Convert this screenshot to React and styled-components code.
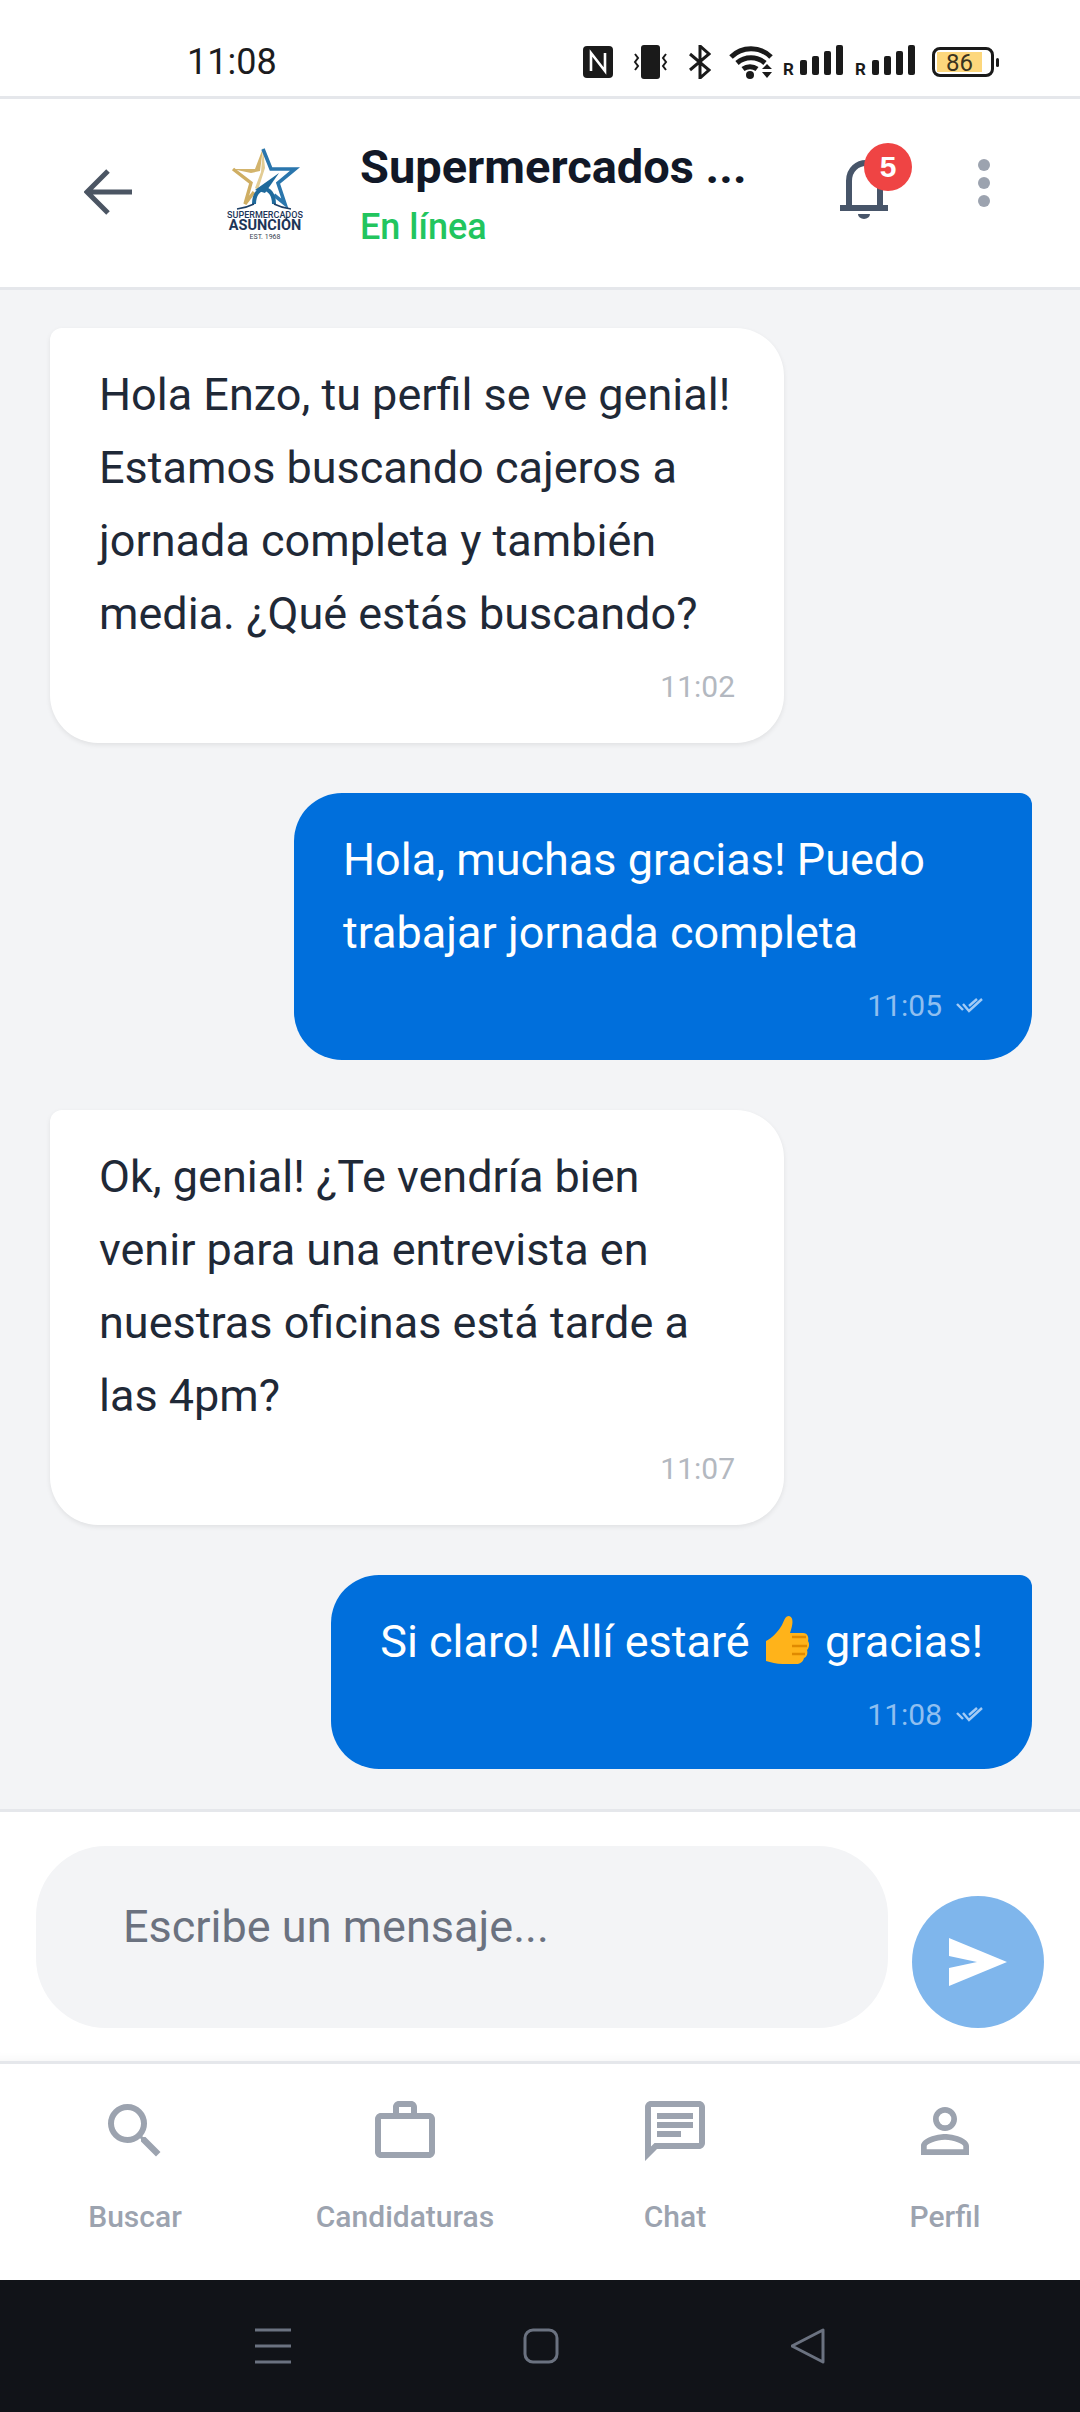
import styled, { createGlobalStyle } from "styled-components";
import { MdSearch, MdOutlineWorkOutline, MdOutlineChat, MdPersonOutline } from "react-icons/md";

const GlobalStyle = createGlobalStyle`
  html, body {
    margin: 0;
    padding: 0;
    background: #ffffff;
    font-family: Roboto, "Noto Sans", sans-serif;
  }
  * {
    box-sizing: border-box;
  }
`;

const Screen = styled.div`
  width: 1080px;
  height: 2412px;
  display: flex;
  flex-direction: column;
  overflow: hidden;
  background: #ffffff;
`;

const StatusBar = styled.div`
  height: 99px;
  flex-shrink: 0;
  display: flex;
  align-items: center;
  justify-content: space-between;
  padding: 27px 86px 0 187px;
  border-bottom: 3px solid #e5e7eb;
`;
const StatusTime = styled.span`
  font-size: 36px;
  color: #1c1c1e;
`;
const StatusIcons = styled.div`
  display: flex;
  align-items: center;
`;
const StatusSvg = styled.svg`
  display: block;
  margin-left: ${(p) => p.$gap || 0}px;
`;
const Battery = styled.div`
  position: relative;
  width: 62px;
  height: 30px;
  margin-left: 17px;
  border: 3px solid #1a1a1a;
  border-radius: 8px;
  padding: 2px;
  &::after {
    content: "";
    position: absolute;
    right: -8px;
    top: 8px;
    width: 3px;
    height: 9px;
    background: #1a1a1a;
    border-radius: 2px;
  }
`;
const BatteryFill = styled.div`
  width: 45px;
  height: 100%;
  background: #fdd77c;
  color: #3a3320;
  font-size: 24px;
  line-height: 22px;
  text-align: center;
`;

const Header = styled.header`
  height: 191px;
  flex-shrink: 0;
  display: flex;
  align-items: center;
  padding: 0 90px 2px 84px;
  border-bottom: 3px solid #e5e7eb;
`;
const BackIcon = styled.svg`
  display: block;
  flex-shrink: 0;
  margin-right: 93px;
`;
const Logo = styled.svg`
  display: block;
  flex-shrink: 0;
  margin: 3px 55px 0 0;
`;
const TitleBlock = styled.div`
  flex: 1;
  display: flex;
  flex-direction: column;
  gap: 12px;
  margin-top: 6px;
`;
const Title = styled.h1`
  margin: 0;
  font-size: 47px;
  line-height: 52px;
  font-weight: 700;
  color: #111827;
`;
const Online = styled.span`
  font-size: 36px;
  line-height: 44px;
  font-weight: 500;
  color: #22c55e;
`;
const BellWrap = styled.div`
  position: relative;
  width: 48px;
  height: 60px;
  margin: 0 90px 6px 0;
`;
const Badge = styled.span`
  position: absolute;
  left: 24px;
  top: -16px;
  width: 48px;
  height: 48px;
  border-radius: 50%;
  background: #ef4444;
  color: #ffffff;
  font-family: "Liberation Sans", sans-serif;
  font-size: 30px;
  font-weight: 700;
  line-height: 48px;
  text-align: center;
`;
const MoreDots = styled.div`
  display: flex;
  flex-direction: column;
  gap: 6px;
  margin-bottom: 18px;
`;
const Dot = styled.span`
  width: 12px;
  height: 12px;
  border-radius: 50%;
  background: #9ca3af;
`;

const Chat = styled.main`
  flex: 1;
  display: flex;
  flex-direction: column;
  gap: 50px;
  padding: 38px 48px 0 50px;
  background: #f3f4f6;
  overflow: hidden;
`;
const Bubble = styled.div`
  align-self: ${(p) => (p.$mine ? "flex-end" : "flex-start")};
  max-width: ${(p) => (p.$mine ? 738 : 734)}px;
  padding: 30px 49px ${(p) => (p.$mine ? 35 : 37)}px 49px;
  border-radius: ${(p) => (p.$mine ? "48px 12px 48px 48px" : "12px 48px 48px 48px")};
  background: ${(p) => (p.$mine ? "#006fdc" : "#ffffff")};
  color: ${(p) => (p.$mine ? "#ffffff" : "#1f2937")};
  box-shadow: ${(p) => (p.$mine ? "none" : "0 2px 5px rgba(0, 0, 0, 0.08)")};
`;
const BubbleText = styled.p`
  margin: 0;
  font-size: 45px;
  line-height: 73px;
`;
const Thumb = styled.svg`
  display: inline-block;
  vertical-align: -8px;
  margin: 0 3px 0 4px;
`;
const Meta = styled.div`
  display: flex;
  justify-content: flex-end;
  align-items: center;
  gap: 14px;
  margin-top: 16px;
  height: 40px;
  font-size: 30px;
  color: ${(p) => (p.$mine ? "#8fbff0" : "#b3b8c0")};
`;

const Composer = styled.div`
  height: 255px;
  flex-shrink: 0;
  display: flex;
  align-items: flex-end;
  gap: 24px;
  padding: 37px 36px 33px;
  background: #ffffff;
  border-top: 3px solid #e5e7eb;
  border-bottom: 3px solid #e5e7eb;
  box-shadow: inset 0 -10px 10px -8px rgba(0, 0, 0, 0.04);
`;
const InputBox = styled.div`
  width: 852px;
  height: 182px;
  padding: 57px 87px 0;
  border-radius: 70px;
  background: #f3f4f6;
  color: #6b7280;
  font-size: 45px;
  line-height: 48px;
`;
const SendButton = styled.button`
  width: 132px;
  height: 132px;
  border: 0;
  padding: 0;
  border-radius: 50%;
  background: #7fb6ec;
  display: flex;
  align-items: center;
  justify-content: center;
`;

const Nav = styled.nav`
  height: 216px;
  flex-shrink: 0;
  display: grid;
  grid-template-columns: repeat(4, 1fr);
  padding-top: 31px;
  background: #ffffff;
`;
const NavItem = styled.div`
  display: flex;
  flex-direction: column;
  align-items: center;
  gap: 32px;
  color: #9ca3af;
`;
const NavLabel = styled.span`
  font-size: 30px;
  line-height: 36px;
  font-weight: 500;
`;

const SystemBar = styled.div`
  height: 132px;
  flex-shrink: 0;
  display: flex;
  align-items: center;
  gap: 232px;
  padding-left: 255px;
  background: #111318;
`;

const DoubleCheck = () => (
  <svg width="27" height="16" viewBox="0 0 27 16" fill="none" stroke="#a3cbf5" strokeWidth="2.4">
    <path d="M1 7l6 6" />
    <path d="M7 7l6 7L26 2" />
    <path d="M13 9l8-7" />
  </svg>
);

const ThumbsUp = () => (
  <Thumb width="46" height="50" viewBox="0 0 46 50">
    <path d="M1 26c6-3 12-9 16-16 2-4 3-9 7-9 5 1 4 9 1 17h13c5 0 6 5 5 8 2 3 1 7-1 9 1 3 0 7-3 8-1 4-4 6-8 6H18C11 49 6 47 1 46z" fill="#ffb31a" />
    <path d="M27 22h14M27 31h15M27 39h13" stroke="#e08a00" strokeWidth="2.5" fill="none" />
  </Thumb>
);

const SignalBars = ({ gap }) => (
  <StatusSvg $gap={gap} width="60" height="34" viewBox="0 0 60 34">
    <text x="0" y="30" fontFamily="Roboto, sans-serif" fontWeight="700" fontSize="17" fill="#1a1a1a">R</text>
    <rect x="17" y="15" width="7" height="15" rx="2" fill="#1a1a1a" />
    <rect x="29" y="11" width="7" height="19" rx="2" fill="#1a1a1a" />
    <rect x="41" y="6" width="7" height="24" rx="2" fill="#1a1a1a" />
    <rect x="53" y="0" width="7" height="30" rx="2" fill="#1a1a1a" />
  </StatusSvg>
);

const messages = [
  { id: 1, text: "Hola Enzo, tu perfil se ve genial! Estamos buscando cajeros a jornada completa y también media. ¿Qué estás buscando?", time: "11:02" },
  { id: 2, mine: true, text: "Hola, muchas gracias! Puedo trabajar jornada completa", time: "11:05" },
  { id: 3, text: "Ok, genial! ¿Te vendría bien venir para una entrevista en nuestras oficinas está tarde a las 4pm?", time: "11:07" },
  { id: 4, mine: true, text: <>Si claro! Allí estaré <ThumbsUp /> gracias!</>, time: "11:08" },
];

const navItems = [
  { label: "Buscar", Icon: MdSearch },
  { label: "Candidaturas", Icon: MdOutlineWorkOutline },
  { label: "Chat", Icon: MdOutlineChat },
  { label: "Perfil", Icon: MdPersonOutline },
];

const App = () => {
  return (
    <Screen>
      <GlobalStyle />
      <StatusBar>
        <StatusTime>11:08</StatusTime>
        <StatusIcons>
          <StatusSvg width="30" height="32" viewBox="0 0 30 32">
            <rect x="0" y="0" width="30" height="32" rx="4" fill="#1a1a1a" />
            <path d="M8 25V7l7 9M15 16l7 9V7" fill="none" stroke="#fff" strokeWidth="2.6" />
          </StatusSvg>
          <StatusSvg $gap={19} width="37" height="34" viewBox="0 0 37 34" fill="none">
            <rect x="9" y="0" width="19" height="34" rx="3" fill="#1a1a1a" />
            <path d="M3 9l3 4-3 4 3 4-3 4M34 9l-3 4 3 4-3 4 3 4" stroke="#1a1a1a" strokeWidth="2" />
          </StatusSvg>
          <StatusSvg $gap={20} width="22" height="34" viewBox="0 0 22 34" fill="none">
            <path d="M1 9l19 16-9 8V1l9 8L1 25" stroke="#1a1a1a" strokeWidth="3" />
          </StatusSvg>
          <StatusSvg $gap={18} width="45" height="34" viewBox="0 0 45 34" fill="none">
            <path d="M2 12c11-11 29-11 40 0M8 18c8-7 20-7 28 0M14 24c4-3 10-3 14 0" stroke="#1a1a1a" strokeWidth="5" />
            <circle cx="21" cy="30" r="4" fill="#1a1a1a" />
            <path d="M38 19l5 5H33zM38 33l5-6H33z" fill="#1a1a1a" />
          </StatusSvg>
          <SignalBars gap={9} />
          <SignalBars gap={12} />
          <Battery>
            <BatteryFill>86</BatteryFill>
          </Battery>
        </StatusIcons>
      </StatusBar>

      <Header>
        <BackIcon width="48" height="46" viewBox="0 0 48 46" fill="none" stroke="#4b5563" strokeWidth="5">
          <path d="M24 2L3 23l21 21M3 23h45" />
        </BackIcon>
        <Logo width="80" height="96" viewBox="0 0 80 96" fill="none">
          <path d="M7 23h23L38 2l-3 23-9 2z" fill="#d3b46c" />
          <path d="M8 23l18 14-6 21 9-12" stroke="#cfae63" strokeWidth="3.4" />
          <path d="M38 2l-2 24-6 16 3 2 7-22z" fill="#e2cc94" />
          <path d="M38 3l8 20h24L53 37l7 21-11-9" stroke="#2a76ad" strokeWidth="3.6" />
          <path d="M30 44l24-17-14 20z" fill="#1f6a9c" />
          <path d="M29 58c0-20 20-20 20 0" stroke="#1f6a9c" strokeWidth="4" />
          <path d="M12 63c8-1 13-3 17-5M66 63c-8-1-13-3-17-5" stroke="#1d3f66" strokeWidth="1.6" />
          <text x="40" y="72" textAnchor="middle" fontFamily="Roboto, sans-serif" fontWeight="500" fontSize="9" fill="#1d3557">SUPERMERCADOS</text>
          <text x="40" y="84" textAnchor="middle" fontFamily="Roboto, sans-serif" fontWeight="700" fontSize="14.5" fill="#1d3557">ASUNCIÓN</text>
          <text x="40" y="93" textAnchor="middle" fontFamily="Roboto, sans-serif" fontSize="7" fill="#374151">EST. 1968</text>
        </Logo>
        <TitleBlock>
          <Title>Supermercados ...</Title>
          <Online>En línea</Online>
        </TitleBlock>
        <BellWrap>
          <svg width="48" height="60" viewBox="0 0 48 60" fill="none">
            <path d="M9 46V22C9 10 18 4 26 4s14 6 14 18v24" stroke="#475569" strokeWidth="6" />
            <path d="M0 46h48v6H0z" fill="#475569" />
            <path d="M18 55h12a6 5 0 0 1-12 0z" fill="#475569" />
          </svg>
          <Badge>5</Badge>
        </BellWrap>
        <MoreDots>
          <Dot />
          <Dot />
          <Dot />
        </MoreDots>
      </Header>

      <Chat>
        {messages.map((m) => (
          <Bubble key={m.id} $mine={m.mine}>
            <BubbleText>{m.text}</BubbleText>
            <Meta $mine={m.mine}>
              <span>{m.time}</span>
              {m.mine && <DoubleCheck />}
            </Meta>
          </Bubble>
        ))}
      </Chat>

      <Composer>
        <InputBox>Escribe un mensaje...</InputBox>
        <SendButton>
          <svg width="58" height="48" viewBox="0 0 58 48">
            <path d="M0 0l58 24L0 48V30l28-6L0 18z" fill="#ffffff" />
          </svg>
        </SendButton>
      </Composer>

      <Nav>
        {navItems.map(({ label, Icon }) => (
          <NavItem key={label}>
            <Icon size={72} />
            <NavLabel>{label}</NavLabel>
          </NavItem>
        ))}
      </Nav>

      <SystemBar>
        <svg width="36" height="36" viewBox="0 0 36 36" stroke="#6b7280" strokeWidth="3">
          <path d="M0 2h36M0 18h36M0 34h36" />
        </svg>
        <svg width="36" height="36" viewBox="0 0 36 36" fill="none" stroke="#6b7280" strokeWidth="3">
          <rect x="2" y="2" width="32" height="32" rx="8" />
        </svg>
        <svg width="36" height="38" viewBox="0 0 36 38" fill="none" stroke="#6b7280" strokeWidth="3">
          <path d="M32 3v32L1 19z" strokeLinejoin="round" />
        </svg>
      </SystemBar>
    </Screen>
  );
};

export default App;
